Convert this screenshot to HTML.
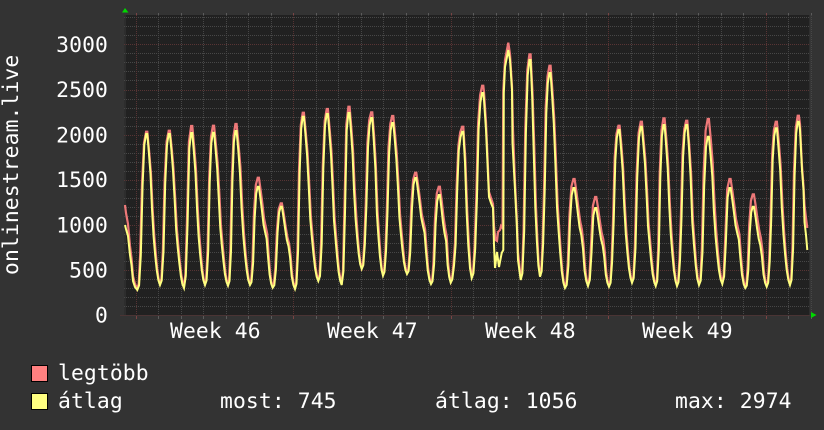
<!DOCTYPE html>
<html><head><meta charset="utf-8">
<style>
html,body{margin:0;padding:0;background:#333;width:824px;height:430px;overflow:hidden}
svg{display:block}
text{font-family:"DejaVu Sans Mono","Liberation Mono",monospace;font-size:21.33px;letter-spacing:.12px;fill:#fff}
</style></head>
<body>
<svg id="s" xmlns="http://www.w3.org/2000/svg" width="824" height="430" viewBox="0 0 824 430">
<rect x="0" y="0" width="824" height="430" fill="#333"/>
<rect x="124" y="15" width="686" height="301" fill="#212121"/>
<rect x="124" y="15" width="2" height="301" fill="#2d2d2d"/>
<g id="grid" shape-rendering="crispEdges"></g>
<polyline id="mx" fill="none" stroke="#ff8080" stroke-opacity=".92" stroke-width="2.2" stroke-linejoin="miter"/>
<polyline id="av" fill="none" stroke="#ffff80" stroke-width="2" stroke-linejoin="miter"/>
<polygon points="125,8 122,12.5 128.5,12.5" fill="#00d800"/>
<polygon points="811,312 811,318 816.5,315" fill="#00d800"/>
<g text-anchor="end">
<text x="108" y="52">3000</text>
<text x="108" y="97">2500</text>
<text x="108" y="142.500">2000</text>
<text x="108" y="187">1500</text>
<text x="108" y="232.500">1000</text>
<text x="108" y="277.500">500</text>
<text x="108" y="322.500">0</text>
</g>
<text transform="translate(18,275) rotate(-90)">onlinestream.live</text>
<text x="170" y="338">Week 46</text>
<text x="327" y="338">Week 47</text>
<text x="485" y="338">Week 48</text>
<text x="642" y="338">Week 49</text>
<rect x="31.500" y="365.500" width="16" height="16" fill="#ff8080" stroke="#000"/>
<rect x="31.500" y="393.500" width="16" height="16" fill="#ffff80" stroke="#000"/>
<text x="58" y="380">legtöbb</text>
<text x="58" y="408">átlag</text>
<text x="220" y="408">most: 745</text>
<text x="435" y="408">átlag: 1056</text>
<text x="675" y="408">max: 2974</text>
</svg>
<script>
(function(){
var g=document.getElementById('grid'),h='';
function ln(x1,y1,x2,y2,c,d){h+='<line x1="'+x1+'" y1="'+y1+'" x2="'+x2+'" y2="'+y2+'" stroke="'+c+'"'+(d?' stroke-dasharray="1 1"':'')+'/>';}
var i;
for(i=0;i<=33;i++){var v=i*100,y=Math.round(315.5-v*0.0904)+0.5;
 if(i==0)continue;
 if(i%5==0)ln(124,y,810,y,'#583434',1);else ln(124,y,810,y,'#474747',1);}
for(i=0;i<31;i++){var x=Math.round(135.5+i*22.5)+0.5;
 var maj=((i%7)==0);
 ln(x,15,x,316,maj?'#583434':'#474747',1);
 ln(x,13,x,15,maj?'#7a4444':'#5c5c5c',0);
 ln(x,316,x,319,maj?'#7a4444':'#5c5c5c',0);}
ln(120,315.5,810,315.5,'#4a3434',0);
ln(810,15,810,316,'#3a3a3a',0);
g.innerHTML=h;
/* xPeak,maxY,avgY,xTroughBefore,troughY,soft */
var D=[
[146.7,131.7,134,137.3,290,0],[169.3,130.7,134,160,285,0],[191.7,126,133,184,288,0],[213.5,125.7,132.7,205,285,0],[236,124,131,228,285.7,0],[258.3,177.7,186.7,250,285,1],[281.3,203.3,206.7,272.7,287.7,1],
[303.3,112.7,116.7,295,289,0],[327.3,109,114,318.3,281,0],[349,106.7,113,341.7,285,0],[371.7,112.3,118,361.7,269,0],[392.7,116,123,383,275.7,0],[415.7,172.7,178,407,274,1],[439.3,186.7,195,431,284,1],
[462.7,126.7,131.7,450.7,282.7,0],[482.7,85.7,93,471.7,278,2],[508.3,42.7,50,495,268,3],[530,54.3,60,520.7,280,0],[550,65.7,73,540,276.7,0],[574,179,188,565,288,1],[595.7,197,208,588,286,1],
[619,125.7,130,609,286.7,0],[641.3,121.7,126.7,632,282.7,0],[664,118.3,125,655.7,286,0],[686.7,120.7,125,677,286,0],[708.3,119,136.7,699,285,0],[730,179,188,722.3,284,1],[753.3,194.3,206.7,745.3,288,1],
[776.3,121.7,128.3,766.7,286.7,0],[798.3,115.7,121.7,790,285,0]];
var R=[[0,0],[.2,.03],[.45,.27],[.55,.57],[.7,.87],[.9,.99],[1,1]];
var F=[[0,1],[.13,.87],[.27,.71],[.42,.4],[.62,.2],[.77,.08],[.9,.02],[1,0]];
var FS=[[0,1],[.12,.88],[.34,.62],[.58,.47],[.73,.17],[.9,.03],[1,0]];
function cv(C,u){for(var k=1;k<C.length;k++){if(u<=C[k][0]){var a=C[k-1],b=C[k];return a[1]+(b[1]-a[1])*(u-a[0])/(b[0]-a[0]);}}return C[C.length-1][1];}
function seg(p,x0,y0,x1,y1,C,up,dx){var n=Math.max(2,Math.round((x1-x0)/1.6));for(var k=1;k<=n;k++){var u=k/n;var v=cv(C,u);var yy=up?y0+(y1-y0)*v:y1+(y0-y1)*v;var sh=dx*Math.sin(Math.PI*u);p.push([x0+(x1-x0)*u+(up?-sh:sh),yy]);}}
function build(ix){
 var off=ix==1?-1.5:0,dx=ix==1?0.6:0,p;
 if(ix==1)p=[[125,205],[126,213],[128,224],[130,246],[131.500,258],[133,276],[135,284]];
 else p=[[125,225],[126,229],[128,236],[130,255],[131.500,265],[133,281],[135,287]];
 p.push([D[0][3],D[0][4]+off]);
 for(var i=0;i<D.length;i++){
  var d=D[i],t=d[4]+off,py=d[ix];
  if(d[5]==3){
   if(ix==1)p.push([502.5,228],[503.3,90],[505,60],[d[0],py]);
   else p.push([503.3,250],[503.8,93],[505,67],[d[0],py]);
  } else {
   seg(p,d[3],t,d[0]-0.6,py,R,true,dx);
   p.push([d[0]+0.6,py]);
  }
  if(i==D.length-1){
   if(ix==1)p.push([800,124],[801,146],[802,166],[803.5,186],[804.5,205],[806,218],[807.3,228]);
   else p.push([800,130],[801,150],[802,170],[803.5,190],[804.5,222],[806,235],[807.3,250]);
   break;
  }
  var nx=D[i+1];
  if(d[5]==2){
   if(ix==1)p.push([484,92],[486,122],[488,168],[489,192],[491,198],[493,204],[494,226],[495.5,240],[497,241],[498,232],[500,230],[501,226]);
   else p.push([484,100],[486,130],[488,175],[489,197],[491,203],[493,208],[494,245],[495,268],[497,252],[499,267],[501.7,253]);
  } else if(d[5]==3){
   if(ix==1)p.push([510,54],[512,86],[513,130],[515,182],[516.7,216],[518,252],[nx[3],nx[4]+off]);
   else p.push([510,60],[512,90],[512.5,143],[515,190],[516.7,223],[518,260],[nx[3],nx[4]]);
  } else {
   seg(p,d[0]+0.6,py,nx[3],nx[4]+off,d[5]==1?FS:F,false,dx);
  }
 }
 return p.map(function(q){return q[0].toFixed(1)+','+q[1].toFixed(1);}).join(' ');
}
document.getElementById('mx').setAttribute('points',build(1));
document.getElementById('av').setAttribute('points',build(2));
})();
</script>
</body></html>
